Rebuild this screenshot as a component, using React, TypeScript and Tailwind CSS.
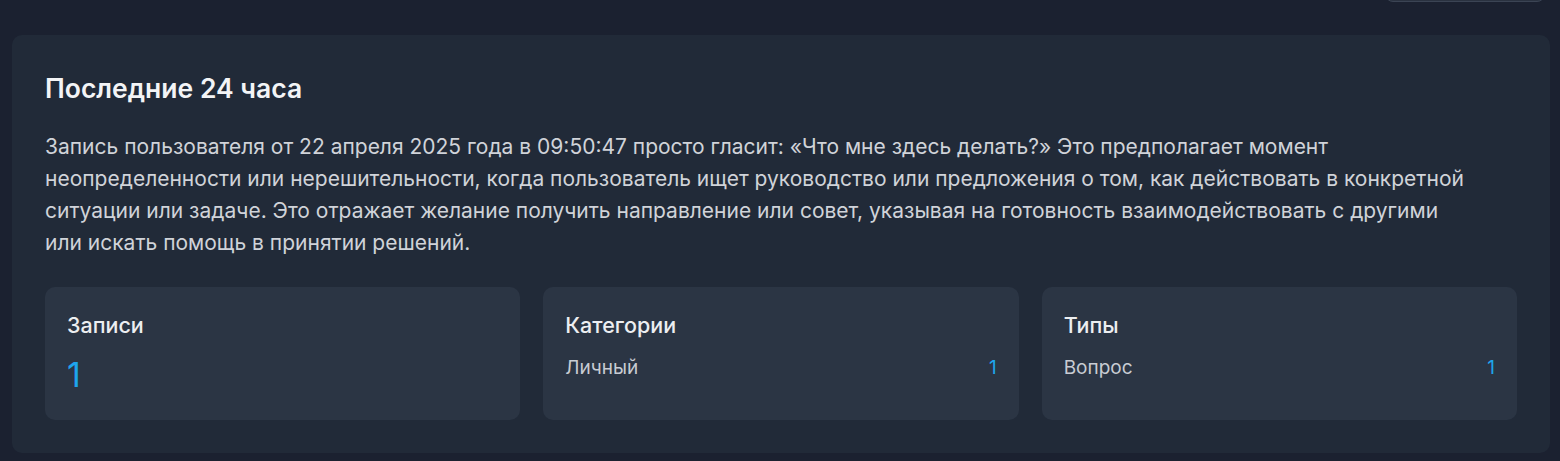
import React from "react";

const font = { fontFamily: "Inter, 'Noto Sans', sans-serif" };

interface StatListProps {
  title: string;
  items: { label: string; count: number }[];
}

function StatList({ title, items }: StatListProps) {
  return (
    <div className="flex flex-col rounded-[10px] bg-[#2b3544] px-[22px] pt-[24px] pb-[25px]">
      <p className="text-[21.5px] leading-[28px] font-medium text-[#eceef1]">{title}</p>
      <div className="mt-[15px] flex flex-col gap-2">
        {items.map((it) => (
          <div key={it.label} className="flex flex-row items-center justify-between">
            <span className="text-[19px] leading-[28px] text-[#c8ccd3]">{it.label}</span>
            <span className="text-[19px] leading-[28px] text-[#1ea5ec]">{it.count}</span>
          </div>
        ))}
      </div>
    </div>
  );
}

export default function App() {
  return (
    <div className="min-h-[461px] w-full bg-[#1b2130] pb-[8px]" style={font}>
      <div className="flex h-[2px] flex-row justify-end pr-[15px]">
        <div className="-mt-[38px] h-[40px] w-[160px] rounded-lg border border-[#3b4454] bg-[#2a3240]" />
      </div>

      <div className="mt-[33px] ml-[12px] mr-[10px] rounded-[10px] bg-[#212a38] px-[33px] pt-[37px] pb-[33px]">
        <h2 className="text-[26.5px] leading-[32px] font-semibold text-[#f3f4f6]">Последние 24 часа</h2>
        <p className="mt-[27px] pr-[14px] text-[21px] leading-[32px] text-[#d0d3d9]">
          Запись пользователя от 22 апреля 2025 года в 09:50:47 просто гласит: «Что мне здесь делать?» Это предполагает момент
          неопределенности или нерешительности, когда пользователь ищет руководство или предложения о том, как действовать в конкретной
          ситуации или задаче. Это отражает желание получить направление или совет, указывая на готовность взаимодействовать с другими
          <br />
          или искать помощь в принятии решений.
        </p>

        <div className="mt-[28px] grid grid-cols-3 gap-[23px]">
          <div className="flex flex-col rounded-[10px] bg-[#2b3544] px-[22px] pt-[24px] pb-[25px]">
            <p className="text-[21.5px] leading-[28px] font-medium text-[#eceef1]">Записи</p>
            <p className="mt-[16px] text-[34px] leading-[40px] text-[#1ea5ec]">1</p>
          </div>
          <StatList title="Категории" items={[{ label: "Личный", count: 1 }]} />
          <StatList title="Типы" items={[{ label: "Вопрос", count: 1 }]} />
        </div>
      </div>
    </div>
  );
}
